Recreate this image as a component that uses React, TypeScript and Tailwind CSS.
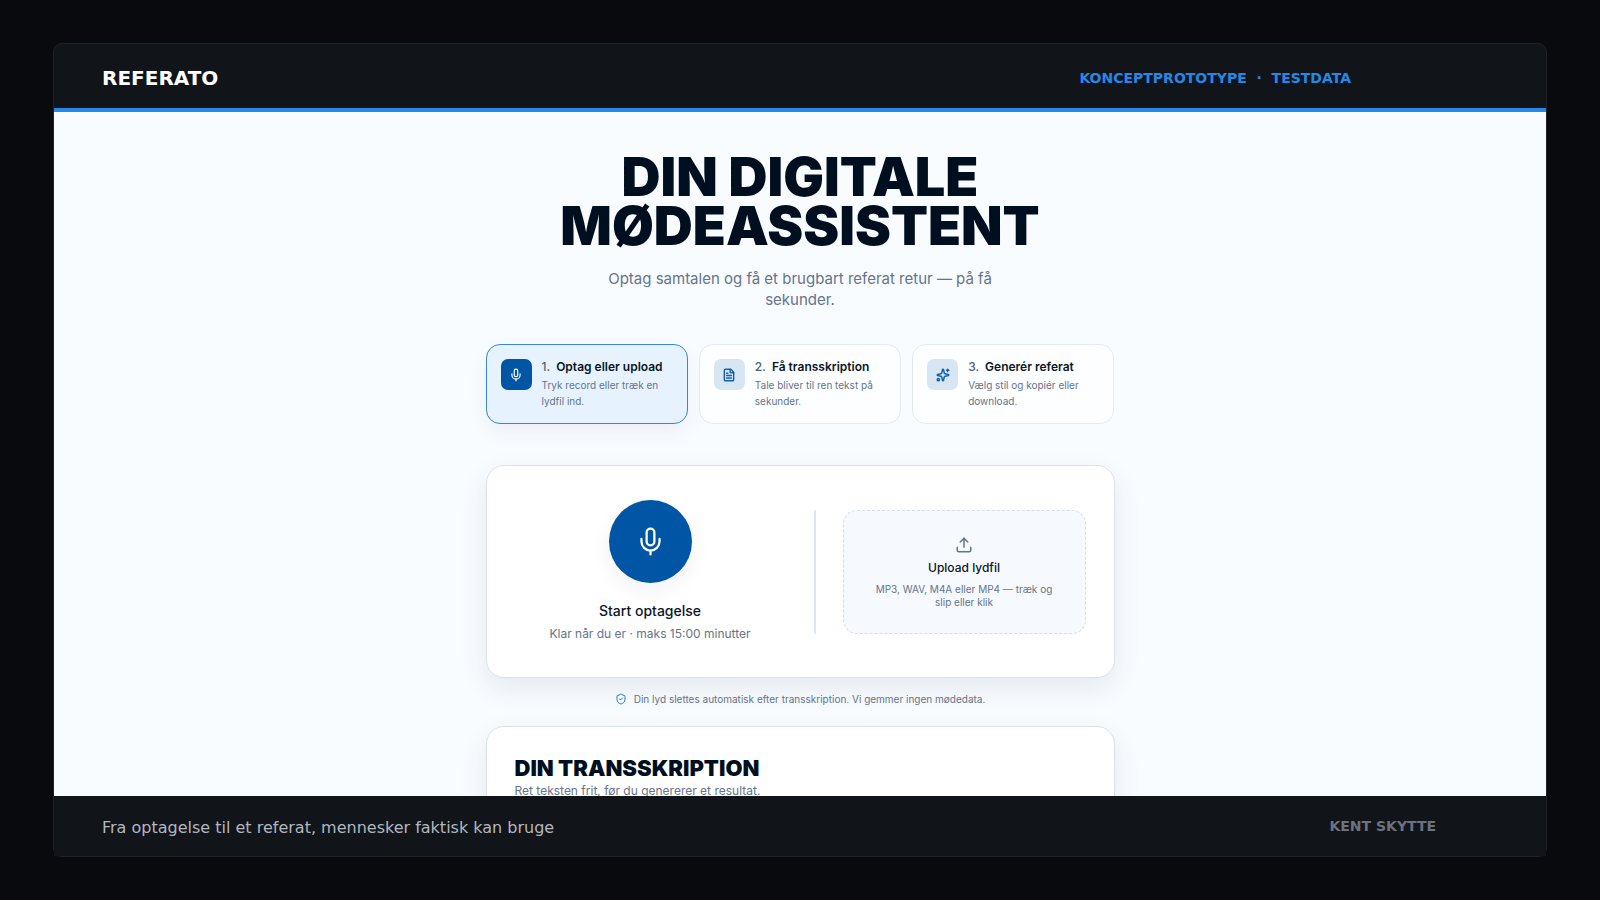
import { FileText, Mic, ShieldCheck, Sparkles, Upload, type LucideIcon } from "lucide-react";
import clsx from "clsx";

interface Step {
  title: string;
  text: string;
  icon: LucideIcon;
}

const steps: Step[] = [
  { title: "Optag eller upload", text: "Tryk record eller træk en lydfil ind.", icon: Mic },
  { title: "Få transskription", text: "Tale bliver til ren tekst på sekunder.", icon: FileText },
  { title: "Generér referat", text: "Vælg stil og kopiér eller download.", icon: Sparkles },
];

function StepCard({ step, number, active }: { step: Step; number: number; active: boolean }) {
  const Icon = step.icon;

  return (
    <li
      className={clsx(
        "flex items-start gap-[10px] rounded-[14px] border p-[14px]",
        active
          ? "border-[#3d85c6] bg-[#e6f3ff] shadow-[0_8px_20px_rgba(15,40,70,0.06)]"
          : "border-[#e4eaf2] bg-[#fdfeff]"
      )}
    >
      <div
        className={clsx(
          "flex size-[31px] shrink-0 items-center justify-center rounded-[7px]",
          active ? "bg-[#0055a5] text-white" : "bg-[#d8e6f3] text-[#0f62b0]"
        )}
      >
        <Icon size={14} strokeWidth={active ? 2 : 2.5} />
      </div>
      <div className="min-w-0">
        <h2 className="text-[12px] leading-4 font-semibold whitespace-nowrap text-[#0b1626]">
          <span className="mr-[6px] font-medium text-[#4f6076]">{number}.</span>
          {step.title}
        </h2>
        <p className="mt-[2px] text-[10px] leading-4 text-[#64748b]">{step.text}</p>
      </div>
    </li>
  );
}

function Recorder() {
  return (
    <section className="mt-[41px] flex items-center rounded-[18px] border border-[#d9e2ec] bg-white px-[28px] pt-[34px] pb-[33px] shadow-[0_10px_28px_rgba(15,40,70,0.09)]">
      {/* Record */}
      <div className="flex flex-1 flex-col items-center pr-[28px]">
        <button
          type="button"
          aria-labelledby="record-label"
          className="flex size-[83px] items-center justify-center rounded-full bg-[#0055a5] text-white shadow-[0_8px_20px_rgba(15,40,70,0.06)]"
        >
          <Mic size={31} strokeWidth={1.75} />
        </button>
        <p id="record-label" className="mt-[17px] text-[14px] leading-[21px] font-medium text-[#0b1626]">
          Start optagelse
        </p>
        <p className="mt-[3px] text-[12px] leading-5 text-[#64748b]">Klar når du er · maks 15:00 minutter</p>
      </div>

      <div className="h-[124px] w-[2px] bg-[#dfe7f0]" />

      {/* Upload */}
      <button
        type="button"
        className="ml-[27px] flex h-[124px] w-[243px] flex-col items-center justify-center rounded-[14px] border border-dashed border-[#d3deea] bg-[#f6f9fe] px-6"
      >
        <Upload size={18} className="text-[#64748b]" />
        <span className="mt-1 text-[12px] leading-5 font-medium text-[#0b1626]">Upload lydfil</span>
        <span className="mt-[5px] text-[10px] leading-[13px] text-[#64748b]">
          MP3, WAV, M4A eller MP4 — træk og slip eller klik
        </span>
      </button>
    </section>
  );
}

export default function App() {
  return (
    <div className="h-screen bg-[#090a0e] px-[53px] py-[43px] font-['DejaVu_Sans',sans-serif]">
      <div className="flex h-full flex-col rounded-[9px] border border-[#1e2227] bg-[#111418]">
        <header className="flex h-[68px] shrink-0 items-center justify-between border-b-4 border-[#2389e9] pt-1 pr-[195px] pl-[48px]">
          <span className="text-[20px] leading-6 font-bold text-white">REFERATO</span>
          <span className="text-[14px] leading-5 font-bold whitespace-pre text-[#2389e9]">
            {"KONCEPTPROTOTYPE  ·  TESTDATA"}
          </span>
        </header>

        <main className="min-h-0 flex-1 overflow-hidden bg-[#f9fcff] px-6 pt-[40px] font-['Inter',sans-serif]">
          <div className="mx-auto max-w-[629px]">
            <h1 className="text-center text-[54px] leading-[49px] font-black text-[#000f20]">
              DIN DIGITALE
              <br />
              MØDEASSISTENT
            </h1>
            <p className="mx-auto mt-[18px] max-w-[420px] text-center text-[15px] leading-[21px] text-[#64748b]">
              Optag samtalen og få et brugbart referat retur — på få sekunder.
            </p>

            <ol className="mt-[34px] grid grid-cols-3 gap-[11px]">
              {steps.map((step, i) => (
                <StepCard key={step.title} step={step} number={i + 1} active={i === 0} />
              ))}
            </ol>

            <Recorder />

            <p className="mt-[13px] flex items-center justify-center gap-[7px] text-[10px] leading-4 text-[#64748b]">
              <ShieldCheck size={12} className="text-[#2277c4]" />
              Din lyd slettes automatisk efter transskription. Vi gemmer ingen mødedata.
            </p>

            <section className="mt-[19px] rounded-[18px] border border-[#d9e2ec] bg-white px-[28px] py-[28px] shadow-[0_10px_28px_rgba(15,40,70,0.09)]">
              <h2 className="text-[22px] leading-[26px] font-black text-[#000f20]">DIN TRANSSKRIPTION</h2>
              <p className="text-[12px] leading-5 text-[#64748b]">Ret teksten frit, før du genererer et resultat.</p>
            </section>
          </div>
        </main>

        <footer className="flex h-[60px] shrink-0 items-center justify-between bg-[#111418] pr-[110px] pl-[48px]">
          <p className="pt-[3px] text-[16px] leading-6 text-[#b1b7c1]">Fra optagelse til et referat, mennesker faktisk kan bruge</p>
          <span className="text-[14px] leading-5 font-bold text-[#6b7280]">KENT SKYTTE</span>
        </footer>
      </div>
    </div>
  );
}
